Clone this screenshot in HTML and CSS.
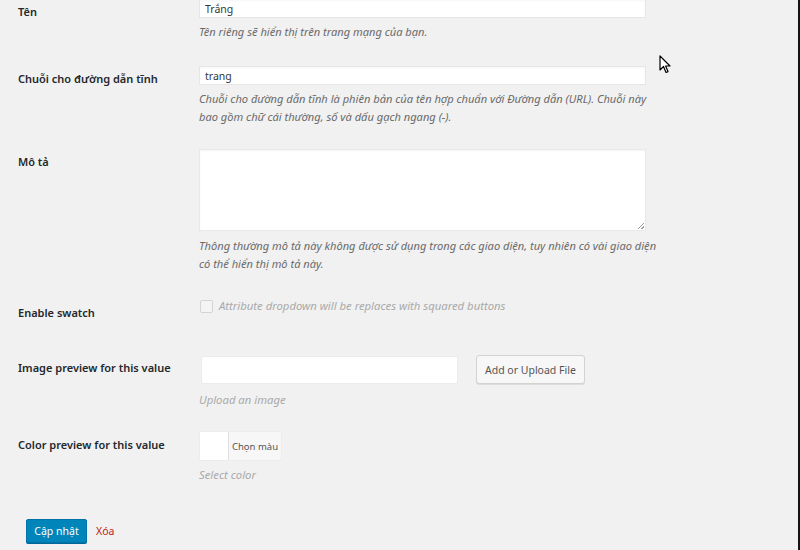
FILE: index.html
```html
<!DOCTYPE html>
<html lang="vi">
<head>
<meta charset="utf-8">
<link rel="stylesheet" href="styles.css">
</head>
<body>
<div class="page">
  <form class="form">
    <div class="row row-name">
      <label class="label">Tên</label>
      <div class="field">
        <input class="text-input" type="text" value="Trắng">
        <p class="desc">Tên riêng sẽ hiển thị trên trang mạng của bạn.</p>
      </div>
    </div>
    <div class="row row-slug">
      <label class="label">Chuỗi cho đường dẫn tĩnh</label>
      <div class="field">
        <input class="text-input" type="text" value="trang">
        <p class="desc">Chuỗi cho đường dẫn tĩnh là phiên bản của tên hợp chuẩn với Đường dẫn (URL). Chuỗi này<br>bao gồm chữ cái thường, số và dấu gạch ngang (-).</p>
      </div>
    </div>
    <div class="row row-desc">
      <label class="label">Mô tả</label>
      <div class="field">
        <div class="textarea"><span class="grip"></span></div>
        <p class="desc desc-ta">Thông thường mô tả này không được sử dụng trong các giao diện, tuy nhiên có vài giao diện<br>có thể hiển thị mô tả này.</p>
      </div>
    </div>
    <div class="row row-swatch">
      <label class="label label-swatch">Enable swatch</label>
      <div class="field check-line">
        <span class="checkbox"></span>
        <span class="muted">Attribute dropdown will be replaces with squared buttons</span>
      </div>
    </div>
    <div class="row row-image">
      <label class="label">Image preview for this value</label>
      <div class="field">
        <div class="upload-line">
          <span class="upload-input"></span>
          <span class="btn-secondary">Add or Upload File</span>
        </div>
        <p class="muted desc-gap">Upload an image</p>
      </div>
    </div>
    <div class="row row-color">
      <label class="label">Color preview for this value</label>
      <div class="field">
        <div class="color-picker">
          <span class="color-swatch"></span>
          <span class="color-text">Chọn màu</span>
        </div>
        <p class="muted desc-gap2">Select color</p>
      </div>
    </div>
    <div class="actions">
      <span class="btn-primary">Cập nhật</span>
      <span class="delete">Xóa</span>
    </div>
  </form>
  <svg class="cursor" width="12" height="19" viewBox="0 0 12 19"><path d="M1 1 L1 15 L4.5 11.5 L7 17.5 L9 16.6 L6.6 11 L11 11 Z" fill="#fff" stroke="#000" stroke-width="1.2" stroke-linejoin="round"/></svg>
</div>
</body>
</html>
```

FILE: styles.css
```css
html, body {
  margin: 0;
  padding: 0;
  background: #f1f1f1;
}
.page {
  position: relative;
  height: 550px;
  overflow: hidden;
  border-right: 2px solid #141414;
  box-sizing: border-box;
  font-family: "Noto Sans", "Open Sans", sans-serif;
  color: #23282d;
}
.form {
  padding-left: 18px;
  margin-top: -1px;
}
.row {
  display: grid;
  grid-template-columns: 181px 500px;
}
.label {
  font-size: 11px;
  font-weight: 600;
  line-height: 18px;
  padding-top: 4px;
  color: #23282d;
}
.field {
  min-width: 0;
}
.text-input {
  display: block;
  box-sizing: border-box;
  width: 447px;
  height: 19px;
  margin: 0;
  border: 1px solid #e6e6e6;
  background: #fff;
  padding: 0 5px;
  font-family: "Noto Sans", sans-serif;
  font-size: 10.5px;
  color: #32373c;
  box-shadow: inset 0 1px 2px rgba(0,0,0,0.04);
  outline: none;
}
.desc {
  margin: 5px 0 0;
  font-size: 11.1px;
  font-style: italic;
  line-height: 18px;
  color: #6a6a6a;
  white-space: nowrap;
}
.row-name { margin-bottom: 25px; }
.row-slug { margin-bottom: 23px; }
.row-desc { margin-bottom: 27px; }
.row-swatch { margin-bottom: 33px; }
.row-image { margin-bottom: 23px; }
.row-color { margin-bottom: 35px; }

.textarea {
  position: relative;
  box-sizing: border-box;
  width: 447px;
  height: 82px;
  background: #fff;
  border: 1px solid #e8e8e8;
  box-shadow: inset 0 1px 2px rgba(0,0,0,0.04);
}
.grip {
  position: absolute;
  right: 1px;
  bottom: 1px;
  width: 6px;
  height: 6px;
  background: linear-gradient(135deg, transparent 45%, #9a9a9a 45%, #9a9a9a 55%, transparent 55%, transparent 75%, #9a9a9a 75%, #9a9a9a 85%, transparent 85%);
}
.desc-ta { margin-top: 6px; }

.check-line {
  display: flex;
  align-items: center;
  gap: 6px;
  height: 18px;
  margin-top: -3px;
  padding-left: 1px;
}
.checkbox {
  box-sizing: border-box;
  width: 13px;
  height: 13px;
  border: 1px solid #d4d4d4;
  border-radius: 2px;
  background: #f4f4f4;
  flex: none;
}
.muted {
  font-size: 11.3px;
  font-style: italic;
  color: #a9a9a9;
  line-height: 18px;
  margin: 0;
  white-space: nowrap;
}
.upload-line {
  display: flex;
  align-items: center;
  gap: 18px;
  padding-left: 2px;
}
.upload-input {
  box-sizing: border-box;
  width: 257px;
  height: 28px;
  background: #fff;
  border: 1px solid #ececec;
  border-radius: 2px;
}
.btn-secondary {
  box-sizing: border-box;
  height: 29px;
  padding: 0 8px;
  display: flex;
  align-items: center;
  font-size: 10.5px;
  color: #555;
  background: #f7f7f7;
  border: 1px solid #d2d2d2;
  border-radius: 3px;
  box-shadow: 0 1px 0 #ddd;
}
.desc-gap { margin-top: 7px; }
.color-picker {
  display: flex;
  width: 81px;
  height: 28px;
  margin-left: 1px;
  box-shadow: 0 0 0 1px #ececec;
  border-radius: 2px;
  background: #f7f7f7;
}
.color-swatch {
  width: 28px;
  height: 28px;
  background: #fff;
  border-right: 1px solid #e0e0e0;
}
.color-text {
  flex: 1;
  display: flex;
  align-items: center;
  justify-content: center;
  font-size: 9.5px;
  color: #555;
}
.desc-gap2 { margin-top: 6px; }

.actions {
  display: flex;
  align-items: center;
  gap: 9px;
  padding-left: 8px;
}
.btn-primary {
  box-sizing: border-box;
  width: 61px;
  height: 24px;
  display: flex;
  align-items: center;
  justify-content: center;
  background: #0085ba;
  border: 1px solid #0073aa;
  border-radius: 2px;
  color: #fff;
  font-size: 10.5px;
  box-shadow: 0 1px 0 #006799;
}
.delete {
  color: #c02020;
  font-size: 10.5px;
}
.cursor {
  position: absolute;
  left: 659px;
  top: 55px;
}
```
